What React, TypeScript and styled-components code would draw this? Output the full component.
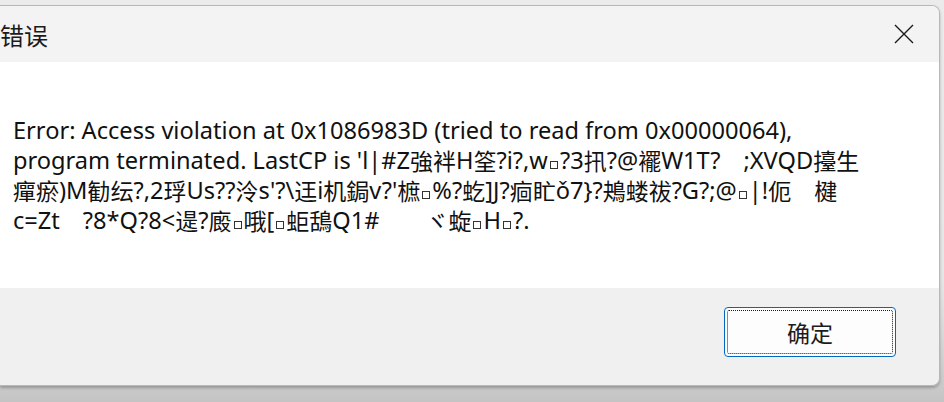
import React from 'react';
import styled, { createGlobalStyle } from 'styled-components';

const GlobalStyle = createGlobalStyle`
	html, body {
		margin: 0;
		padding: 0;
	}
	body {
		width: 944px;
		height: 402px;
		overflow: hidden;
		font-family: 'Noto Sans', 'Noto Sans CJK SC', sans-serif;
	}
`;

const MESSAGE = [
	'Error: Access violation at 0x1086983D (tried to read from 0x00000064),',
	"program terminated. LastCP is 'l|#Z強袢H筌?i?,w□?3扟?@襬W1T?　;XVQD擡生",
	"癉瘀)M勧纭?,2琈Us??泠s'?\\迋i机鋦v?'樜□%?虼]J?痐盳ǒ7}?鴂蝼祓?G?;@□|!伌　楗",
	'c=Zt　?8*Q?8<遈?廄□哦[□蚷鴰Q1#　　ヾ蜁□H□?.',
];

const CJK_RUN = /([\u3000-\u30ff\u3400-\u9fff\uff00-\uffef]+)/;

// the garbled text mixes latin, CJK and tofu boxes; CJK runs get their own size
function renderLine(text: string) {
	const out: React.ReactNode[] = [];
	text.split('□').forEach((chunk, i, all) => {
		chunk.split(CJK_RUN).forEach((run, j) => {
			if (!run) return;
			if (j % 2 === 1) out.push(<Cjk key={`${i}-${j}`}>{run}</Cjk>);
			else out.push(run);
		});
		if (i < all.length - 1) out.push(<Tofu key={`t${i}`} />);
	});
	return out;
}

export default function App() {
	return (
		<>
			<GlobalStyle />
			<Desktop>
				<Window>
					<TitleBar>
						<Title>错误</Title>
						<CloseButton aria-label="关闭">
							<svg width="20" height="20" viewBox="0 0 20 20">
								<path d="M1 1 L19 19 M19 1 L1 19" stroke="#1b1b1b" strokeWidth="1.4" fill="none" />
							</svg>
						</CloseButton>
					</TitleBar>
					<Content>
						{MESSAGE.map((line, i) => (
							<Line key={i}>{renderLine(line)}</Line>
						))}
					</Content>
					<Footer>
						<OkButton autoFocus>
							<FocusRing>确定</FocusRing>
						</OkButton>
					</Footer>
				</Window>
			</Desktop>
		</>
	);
}

const Desktop = styled.div`
	height: 402px;
	box-sizing: border-box;
	padding: 5px 4px 0 0;
	background: linear-gradient(#ebebeb 0%, #e6e6e6 70%, #cfcfcf 92%, #c4c4c4 100%);
`;

const Window = styled.div`
	height: 381px;
	box-sizing: border-box;
	display: flex;
	flex-direction: column;
	border: 1px solid #b8b8b8;
	border-left: none;
	border-radius: 0 8px 8px 0;
	overflow: hidden;
	box-shadow: 0 2px 3px rgba(0, 0, 0, 0.25);
`;

const TitleBar = styled.div`
	height: 56px;
	flex-shrink: 0;
	display: flex;
	align-items: center;
	justify-content: space-between;
	background: #f3f3f3;
`;

const Title = styled.div`
	font-family: 'Noto Sans CJK SC', sans-serif;
	font-size: 24px;
	color: #1b1b1b;
`;

const CloseButton = styled.div`
	width: 20px;
	height: 20px;
	margin-right: 25px;
	display: flex;
	align-items: center;
	justify-content: center;
`;

const Content = styled.div`
	flex: 1;
	background: #ffffff;
	padding: 53px 0 0 13px;
	color: #111111;
	font-size: 23.6px;
`;

const Line = styled.div`
	height: 30px;
	line-height: 30px;
	white-space: pre;
`;

const Cjk = styled.span`
	display: inline-block;
	height: 30px;
	line-height: 30px;
	vertical-align: top;
	font-family: 'Noto Sans CJK SC', sans-serif;
	font-size: 23px;
`;

const Tofu = styled.span`
	display: inline-block;
	width: 6px;
	height: 6px;
	margin: 0 2px;
	border: 1px solid #333333;
	vertical-align: 0px;
`;

const Footer = styled.div`
	height: 97px;
	flex-shrink: 0;
	box-sizing: border-box;
	display: flex;
	justify-content: flex-end;
	align-items: flex-start;
	padding: 19px 43px 0 0;
	background: #f0f0f0;
`;

const OkButton = styled.button`
	width: 172px;
	height: 50px;
	padding: 2px;
	box-sizing: border-box;
	border: 1px solid #0067c0;
	border-radius: 4px;
	background: #fdfdfd;
	outline: none;
	font-family: 'Noto Sans CJK SC', sans-serif;
	font-size: 23px;
	color: #1b1b1b;
`;

const FocusRing = styled.div`
	height: 100%;
	box-sizing: border-box;
	border: 1px dotted #1b1b1b;
	border-radius: 2px;
	display: flex;
	align-items: center;
	justify-content: center;
`;
